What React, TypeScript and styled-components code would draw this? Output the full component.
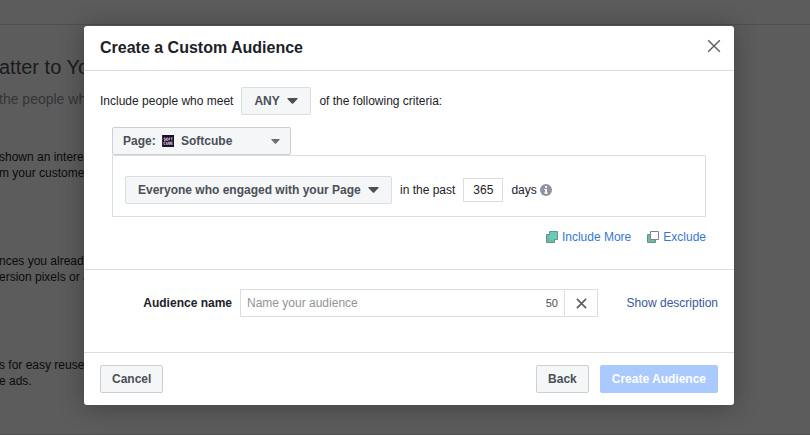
import React from "react";
import styled, { createGlobalStyle } from "styled-components";

const GlobalStyle = createGlobalStyle`
  *, *::before, *::after { box-sizing: border-box; }
  body {
    margin: 0;
    font-family: "Liberation Sans", Arial, sans-serif;
    font-size: 12px;
    line-height: 16px;
    color: #1d2129;
    background: #fff;
  }
  button, input, select { font: inherit; margin: 0; }
  h1, h2, p { margin: 0; }
`;

const Page = styled.div`
  min-height: 100vh;
  display: grid;
  overflow: hidden;
`;

const Backdrop = styled.div`
  grid-area: 1 / 1;
  background: #fff;
  white-space: nowrap;
  display: flex;
  flex-direction: column;
  min-width: 0;
  overflow: hidden;
`;

const TopBar = styled.div`
  height: 25px;
  flex: none;
  border-bottom: 1px solid #d8d8d8;
`;

const Intro = styled.div`
  flex: 1;
  margin-left: -1px;
  padding-top: 29px;
  border-bottom: 1px solid #d8d8d8;
`;

const IntroTitle = styled.h1`
  font-size: 20px;
  line-height: 26px;
  font-weight: 400;
  color: #4b4f56;
`;

const IntroLead = styled.p`
  margin-top: 9px;
  font-size: 14px;
  line-height: 20px;
  color: #90949c;
`;

const IntroItem = styled.p<{ $gap: number }>`
  margin-top: ${(p) => p.$gap}px;
`;

const Overlay = styled.div`
  grid-area: 1 / 1;
  z-index: 1;
  display: flex;
  justify-content: center;
  align-items: flex-start;
  padding: 26px 8px 24px 16px;
  background: rgba(0, 0, 0, 0.64);
  min-width: 0;
`;

const Dialog = styled.section`
  width: 100%;
  max-width: 650px;
  background: #fff;
  border-radius: 3px;
  box-shadow: 0 2px 26px rgba(0, 0, 0, 0.3);
`;

const Header = styled.header`
  display: flex;
  align-items: center;
  justify-content: space-between;
  height: 45px;
  padding: 0 11px 0 16px;
  border-bottom: 1px solid #dadde1;
`;

const Title = styled.h2`
  font-size: 16px;
  line-height: 20px;
  font-weight: 700;
`;

const IconButton = styled.button`
  display: flex;
  padding: 2px;
  border: 0;
  background: none;
  color: #5a5d63;
  cursor: pointer;
`;

const CloseButton = styled(IconButton)`
  padding-bottom: 6px;
`;

const Criteria = styled.div`
  padding: 16px 28px 24px 16px;
  border-bottom: 1px solid #dadde1;
`;

const MatchRow = styled.div`
  display: flex;
  align-items: center;
  gap: 8px;
`;

const Rule = styled.div`
  margin: 12px 0 0 12px;
`;

const RuleBox = styled.div`
  display: flex;
  align-items: center;
  gap: 8px;
  height: 62px;
  padding: 7px 12px 0;
  border: 1px solid #dadde1;
`;

const SelectFrame = styled.div<{ $width: number }>`
  display: grid;
  align-items: center;
  width: ${(p) => p.$width}px;
`;

const Select = styled.select<{ $indent?: number; $strong?: boolean }>`
  grid-area: 1 / 1;
  appearance: none;
  width: 100%;
  height: 28px;
  padding: 0 24px 0 ${(p) => p.$indent ?? 12}px;
  border: 1px solid ${(p) => (p.$strong ? "#ccd0d5" : "#dadde1")};
  border-radius: 2px;
  background: #f5f6f7;
  color: #4b4f56;
  font-weight: 700;
  cursor: pointer;
`;

const Prefix = styled.label`
  grid-area: 1 / 1;
  z-index: 1;
  display: flex;
  align-items: center;
  gap: 6px;
  padding-left: 11px;
  font-weight: 700;
  color: #4b4f56;
  pointer-events: none;
`;

const CaretSlot = styled.span<{ $inset: number }>`
  grid-area: 1 / 1;
  z-index: 1;
  justify-self: end;
  display: flex;
  padding-right: ${(p) => p.$inset}px;
  color: #4b4f56;
  pointer-events: none;
`;

const DaysInput = styled.input`
  width: 40px;
  height: 24px;
  padding: 0;
  border: 1px solid #dadde1;
  background: #fff;
  color: #1d2129;
  text-align: center;
`;

const Hint = styled.span`
  display: flex;
  align-items: center;
  gap: 3px;
`;

const RuleLinks = styled.div`
  display: flex;
  justify-content: flex-end;
  gap: 16px;
  margin-top: 12px;
`;

const Link = styled.a`
  display: inline-flex;
  align-items: center;
  gap: 4px;
  color: #3578d0;
  text-decoration: none;
`;

const DescriptionLink = styled(Link)`
  margin-left: auto;
  color: #365899;
`;

const NameRow = styled.div`
  display: flex;
  align-items: center;
  padding: 19px 16px 35px;
  border-bottom: 1px solid #dadde1;
`;

const NameLabel = styled.label`
  width: 132px;
  text-align: right;
  font-weight: 700;
`;

const NameField = styled.div`
  display: flex;
  flex: 0 1 358px;
  height: 28px;
  margin-left: 8px;
  border: 1px solid #dadde1;
`;

const NameInput = styled.input`
  flex: 1;
  min-width: 0;
  padding: 0 6px;
  border: 0;
  background: none;
  color: #1d2129;
  &::placeholder { color: #90949c; opacity: 1; }
`;

const Counter = styled.span`
  display: flex;
  align-items: center;
  padding-right: 6px;
  font-size: 11px;
  color: #4b4f56;
`;

const ClearButton = styled(IconButton)`
  width: 33px;
  align-items: center;
  justify-content: center;
  border-left: 1px solid #dadde1;
`;

const Footer = styled.footer`
  display: flex;
  gap: 11px;
  padding: 12px 16px;
`;

const Button = styled.button<{ $primary?: boolean; $push?: boolean }>`
  height: 28px;
  padding: 0 11px;
  margin-right: ${(p) => (p.$push ? "auto" : "0")};
  border: 1px solid ${(p) => (p.$primary ? "#a9c9ff" : "#ccd0d5")};
  border-radius: 2px;
  background: ${(p) => (p.$primary ? "#a9c9ff" : "#f5f6f7")};
  color: ${(p) => (p.$primary ? "#fff" : "#4b4f56")};
  font-weight: 700;
  cursor: pointer;
`;

const Caret = ({ small }: { small?: boolean }) => (
  <svg width={small ? 9 : 11} height={small ? 5 : 6} viewBox="0 0 11 6" preserveAspectRatio="none" aria-hidden="true">
    <path
      d="M0.8 0H10.2Q11 0 10.5 1L6.2 5.5Q5.5 6.2 4.8 5.5L0.5 1Q0 0 0.8 0Z"
      fill={small ? "#6a6e75" : "currentColor"}
    />
  </svg>
);

const Cross = ({ size, weight }: { size: number; weight: number }) => (
  <svg width={size} height={size} viewBox="0 0 12 12" aria-hidden="true">
    <path d="M1 1L11 11M11 1L1 11" stroke="currentColor" strokeWidth={weight} fill="none" />
  </svg>
);

const SoftcubeLogo = () => (
  <svg width="12" height="12" viewBox="0 0 12 12" aria-hidden="true">
    <rect width="12" height="12" fill="#15122b" />
    <path d="M0.5 0V12" stroke="#4a1f45" />
    <g fill="none" stroke="#d8bcd3" strokeWidth="0.8">
      <path d="M3.5 3H2V4.2H3.5V5.4H2M4.5 3H6V5.4H4.5ZM8.2 3H7V5.4M7 4.2H8M8.7 3H10.7M9.7 3V5.4" />
      <path d="M3.5 7H2V9.4H3.5M4.4 7V9.4H5.9V7M6.8 7H8.3V9.4H6.8ZM6.8 8.2H8.3M10.7 7H9.2V9.4H10.7M9.2 8.2H10.5" />
    </g>
  </svg>
);

const OverlapIcon = ({ hollow }: { hollow?: boolean }) => (
  <svg width="12" height="12" viewBox="0 0 12 12" aria-hidden="true">
    <path d="M0.5 3.5H8.5V11.5H0.5Z" fill="#69bda8" stroke="#728c87" />
    <path
      d="M3.5 0.5H11.5V8.5H3.5Z"
      fill={hollow ? "#fff" : "#69cbb7"}
      stroke={hollow ? "#7f858c" : "#5a9d91"}
    />
    {!hollow && <path d="M3.5 4V8.5H8" fill="none" stroke="#69cbb7" />}
  </svg>
);

const InfoIcon = () => (
  <svg width="12" height="12" viewBox="0 0 12 12" aria-hidden="true">
    <circle cx="6" cy="6" r="6" fill="#90949c" />
    <path d="M5 2H7V3.8H5ZM4.4 4.9H7V8.4H7.7V9.7H4.3V8.4H5.1V6.1H4.4Z" fill="#fff" />
  </svg>
);

export default function App() {
  return (
    <>
      <GlobalStyle />
      <Page>
        <Backdrop aria-hidden="true">
          <TopBar />
          <Intro>
            <IntroTitle>atter to Yo</IntroTitle>
            <IntroLead>the people wh</IntroLead>
            <IntroItem $gap={40}>
              shown an intere
              <br />m your custome
            </IntroItem>
            <IntroItem $gap={72}>
              nces you alread
              <br />
              ersion pixels or a
            </IntroItem>
            <IntroItem $gap={72}>
              s for easy reuse
              <br />e ads.
            </IntroItem>
          </Intro>
        </Backdrop>

        <Overlay>
          <Dialog role="dialog" aria-modal="true" aria-labelledby="dialog-title">
            <Header>
              <Title id="dialog-title">Create a Custom Audience</Title>
              <CloseButton type="button" aria-label="Close">
                <Cross size={14} weight={1.2} />
              </CloseButton>
            </Header>

            <Criteria>
              <MatchRow>
                <label htmlFor="match">Include people who meet</label>
                <SelectFrame $width={70}>
                  <Select id="match">
                    <option>ANY</option>
                  </Select>
                  <CaretSlot $inset={13}>
                    <Caret />
                  </CaretSlot>
                </SelectFrame>
                <span>of the following criteria:</span>
              </MatchRow>

              <Rule>
                <SelectFrame $width={179}>
                  <Select id="page" $indent={68} $strong>
                    <option>Softcube</option>
                  </Select>
                  <Prefix htmlFor="page">
                    Page:
                    <SoftcubeLogo />
                  </Prefix>
                  <CaretSlot $inset={11}>
                    <Caret small />
                  </CaretSlot>
                </SelectFrame>
                <RuleBox>
                  <SelectFrame $width={267}>
                    <Select aria-label="Engagement">
                      <option>Everyone who engaged with your Page</option>
                    </Select>
                    <CaretSlot $inset={13}>
                      <Caret />
                    </CaretSlot>
                  </SelectFrame>
                  <label htmlFor="days">in the past</label>
                  <DaysInput id="days" defaultValue="365" />
                  <Hint>
                    days
                    <InfoIcon />
                  </Hint>
                </RuleBox>
                <RuleLinks>
                  <Link href="#include">
                    <OverlapIcon />
                    Include More
                  </Link>
                  <Link href="#exclude">
                    <OverlapIcon hollow />
                    Exclude
                  </Link>
                </RuleLinks>
              </Rule>
            </Criteria>

            <NameRow>
              <NameLabel htmlFor="audience-name">Audience name</NameLabel>
              <NameField>
                <NameInput id="audience-name" placeholder="Name your audience" />
                <Counter>50</Counter>
                <ClearButton type="button" aria-label="Clear name">
                  <Cross size={11} weight={1.8} />
                </ClearButton>
              </NameField>
              <DescriptionLink href="#description">Show description</DescriptionLink>
            </NameRow>

            <Footer>
              <Button type="button" $push>
                Cancel
              </Button>
              <Button type="button">Back</Button>
              <Button type="button" $primary>
                Create Audience
              </Button>
            </Footer>
          </Dialog>
        </Overlay>
      </Page>
    </>
  );
}
